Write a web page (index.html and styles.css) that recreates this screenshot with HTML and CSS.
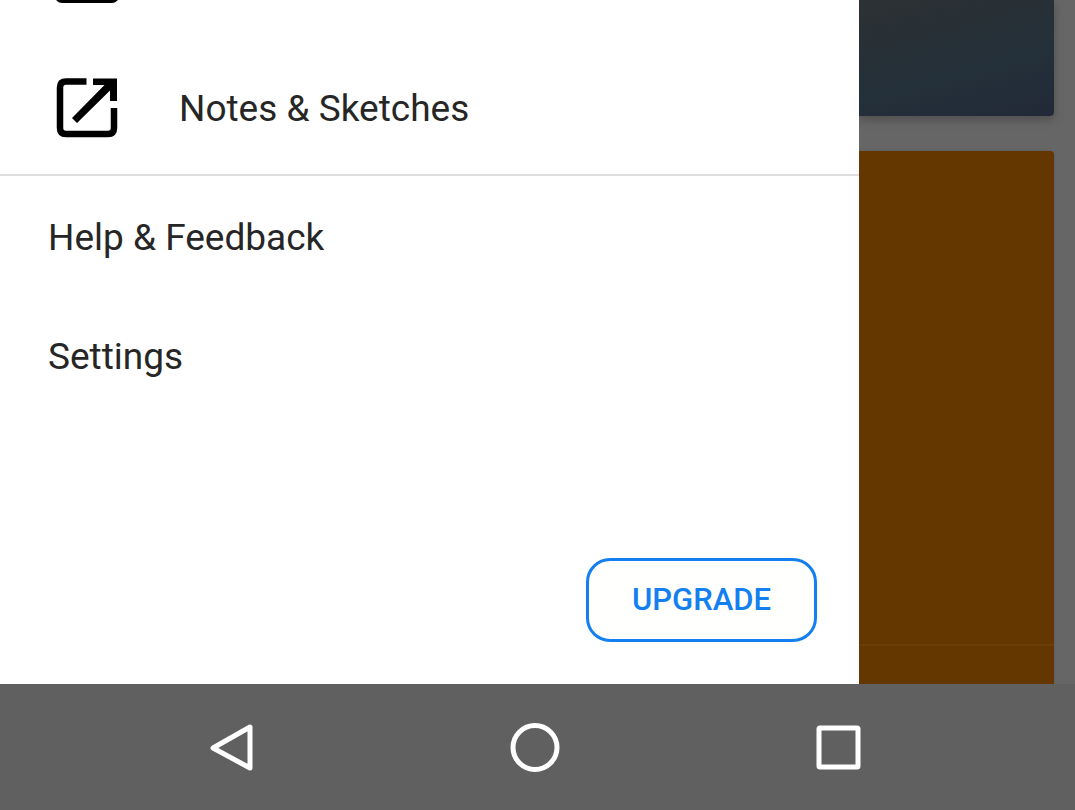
FILE: index.html
```html
<!DOCTYPE html>
<html lang="en">
<head>
<meta charset="utf-8">
<meta name="viewport" content="width=device-width, initial-scale=1">
<title>Notes &amp; Sketches</title>
<link rel="stylesheet" href="styles.css">
</head>
<body>
<div class="screen">
  <aside class="drawer">
    <nav class="menu">
      <div class="previous">
        <svg class="icon" viewBox="0 0 64 64" aria-hidden="true"><rect x="3" y="3" width="58" height="58" rx="4" fill="none" stroke="#000" stroke-width="6"/></svg>
      </div>
      <a class="item" href="#notes">
        <svg class="icon" viewBox="0 0 64 64" aria-hidden="true">
          <path d="M31.500 4.500H11Q5 4.500 5 10.500V51Q5 57 11 57H53Q59 57 59 51V31" fill="none" stroke="#000" stroke-width="6.500"/>
          <path d="M38 1.500H62V24H55V13.500L22 46L17 41L49.500 8H38Z"/>
        </svg>
        <span>Notes &amp; Sketches</span>
      </a>
      <hr class="divider">
      <a class="item" href="#help">Help &amp; Feedback</a>
      <a class="item" href="#settings">Settings</a>
    </nav>
    <div class="actions">
      <button class="upgrade" type="button">UPGRADE</button>
    </div>
  </aside>
  <main class="backdrop">
    <div class="card photo"></div>
    <div class="card note"><div class="rule"></div></div>
  </main>
  <footer class="system">
    <button class="key" type="button" aria-label="Back">
      <svg viewBox="0 0 48 48" aria-hidden="true"><path d="M42 4V45L5 25Z"/></svg>
    </button>
    <button class="key" type="button" aria-label="Home">
      <svg viewBox="0 0 48 48" aria-hidden="true"><circle cx="24" cy="24.500" r="22"/></svg>
    </button>
    <button class="key" type="button" aria-label="Recent apps">
      <svg viewBox="0 0 48 48" aria-hidden="true"><rect x="5" y="5" width="39" height="39" rx="1"/></svg>
    </button>
  </footer>
</div>
</body>
</html>
```
FILE: styles.css
```css
* { box-sizing: border-box; }

body {
  margin: 0;
  font-family: Roboto, sans-serif;
  color: #262626;
}

.screen {
  display: grid;
  grid-template-columns: 1fr 216px;
  grid-template-rows: 1fr 126px;
  min-height: 100vh;
  background: #666;
}

.drawer {
  display: flex;
  flex-direction: column;
  justify-content: space-between;
  background: #fff;
}

.previous {
  display: flex;
  align-items: flex-end;
  height: 49px;
  padding: 0 55px 46px;
  overflow: hidden;
}

.icon {
  flex: none;
  width: 64px;
  height: 64px;
  margin-right: 60px;
}

.item {
  display: flex;
  align-items: center;
  height: 119px;
  padding: 0 48px;
  font-size: 37px;
  line-height: 48px;
  color: inherit;
  text-decoration: none;
}

.item .icon { margin-left: 7px; }

.divider {
  height: 2px;
  margin: 6px 0 2px;
  border: 0;
  background: #ddd;
}

.actions {
  display: flex;
  justify-content: flex-end;
  padding: 0 42px 42px;
}

.upgrade {
  padding: 0 43px;
  height: 84px;
  border: 3px solid #147ff0;
  border-radius: 24px;
  background: #fffffd;
  color: #147ff0;
  font: 500 31px/40px Roboto, sans-serif;
}

.backdrop {
  display: flex;
  flex-direction: column;
  gap: 35px;
  padding-right: 21px;
  overflow: hidden;
}

.card { box-shadow: 0 4px 8px #505050; }

.photo {
  height: 116px;
  border-radius: 0 0 4px 0;
  background: linear-gradient(165deg, #2c3133, #24303a 60%, #222938);
}

.note {
  display: flex;
  flex: 1;
  flex-direction: column;
  justify-content: flex-end;
  padding-bottom: 38px;
  border-radius: 0 4px 0 0;
  background: #643700;
  box-shadow: 0 0 3px #585858;
}

.rule {
  height: 2px;
  background: #6b3d08;
}

.system {
  display: flex;
  grid-column: 1 / -1;
  align-items: center;
  justify-content: center;
  gap: 255px;
  padding-right: 5px;
  background: #606060;
}

.key {
  width: 48px;
  height: 48px;
  padding: 0;
  border: 0;
  background: none;
}

.key svg {
  display: block;
  overflow: visible;
  fill: none;
  stroke: #fff;
  stroke-width: 5;
  stroke-linejoin: round;
}
```
